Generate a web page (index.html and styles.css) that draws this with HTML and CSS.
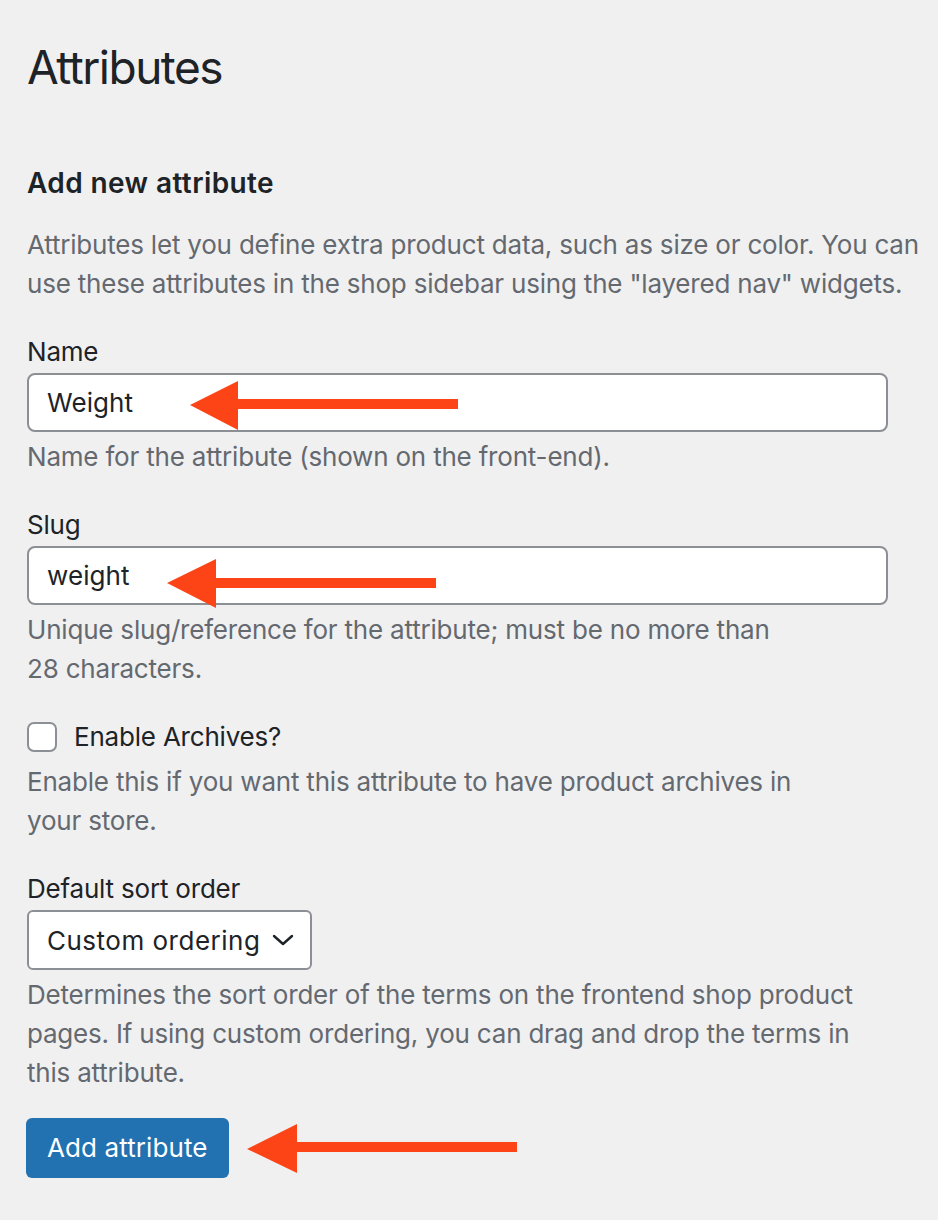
FILE: index.html
```html
<!DOCTYPE html>
<html lang="en">
<head>
<meta charset="utf-8">
<title>Attributes</title>
<link rel="stylesheet" href="styles.css">
</head>
<body>
<div class="wrap">
  <h1 class="page-title">Attributes</h1>
  <form class="form-wrap">
    <h2 class="form-title">Add new attribute</h2>
    <p class="intro">Attributes let you define extra product data, such as size or color. You can<br>use these attributes in the shop sidebar using the "layered nav" widgets.</p>

    <div class="field">
      <label class="label" for="attr-name">Name</label>
      <input class="text-input" id="attr-name" type="text" value="Weight">
      <p class="description">Name for the attribute (shown on the front-end).</p>
    </div>

    <div class="field">
      <label class="label" for="attr-slug">Slug</label>
      <input class="text-input" id="attr-slug" type="text" value="weight">
      <p class="description">Unique slug/reference for the attribute; must be no more than<br>28 characters.</p>
    </div>

    <div class="field">
      <label class="check-row" for="attr-archives">
        <span class="checkbox" id="attr-archives"></span>
        <span class="check-label">Enable Archives?</span>
      </label>
      <p class="description description-check">Enable this if you want this attribute to have product archives in<br>your store.</p>
    </div>

    <div class="field">
      <label class="label" for="attr-order">Default sort order</label>
      <div class="select" id="attr-order">
        <span class="select-value">Custom ordering</span>
        <svg class="chevron" width="22" height="14" viewBox="0 0 22 14"><path d="M2 3 L11 11 L20 3" fill="none" stroke="#1d2327" stroke-width="2.4" stroke-linecap="round" stroke-linejoin="round"/></svg>
      </div>
      <p class="description">Determines the sort order of the terms on the frontend shop product<br>pages. If using custom ordering, you can drag and drop the terms in<br>this attribute.</p>
    </div>

    <div class="submit">
      <button type="button" class="button-primary">Add attribute</button>
    </div>
  </form>

  <svg class="arrows" width="938" height="1220" viewBox="0 0 938 1220" aria-hidden="true">
    <g fill="#fd4416">
      <polygon points="190,405 238,381 238,430"/>
      <rect x="236" y="399" width="222" height="10"/>
      <polygon points="167,583 216,559 216,608"/>
      <rect x="214" y="578" width="222" height="10"/>
      <polygon points="247,1149 297,1124 297,1173"/>
      <rect x="295" y="1142" width="222" height="10"/>
    </g>
  </svg>
</div>
</body>
</html>
```

FILE: styles.css
```css
html, body {
  margin: 0;
  padding: 0;
  background: #f0f0f1;
}

body {
  font-family: Inter, "Noto Sans", "Liberation Sans", sans-serif;
  color: #1d2327;
  font-size: 26px;
  line-height: 39px;
  letter-spacing: -0.2px;
}

.wrap {
  position: relative;
  width: 938px;
  min-height: 1220px;
  padding: 37px 0 0 27px;
  box-sizing: border-box;
}

.page-title {
  margin: 0;
  font-size: 46px;
  font-weight: 400;
  line-height: 60px;
  letter-spacing: -1.5px;
  color: #1d2327;
}

.form-wrap {
  margin: 0;
  width: 861px;
}

.form-title {
  margin: 68px 0 0;
  font-size: 28px;
  font-weight: 600;
  line-height: 36px;
  letter-spacing: 0.4px;
}

.intro {
  margin: 24px 0 0;
  color: #646970;
  white-space: nowrap;
}

.field {
  margin-top: 29px;
}

.label {
  display: block;
  margin-bottom: 2px;
}

.text-input {
  display: block;
  box-sizing: border-box;
  width: 861px;
  height: 59px;
  margin: 0;
  padding: 0 18px;
  border: 2px solid #8c8f94;
  border-radius: 8px;
  background: #fff;
  font-family: inherit;
  font-size: 26px;
  letter-spacing: 0.1px;
  color: #1d2327;
  outline: none;
}

.description {
  margin: 5px 0 0;
  color: #646970;
  white-space: nowrap;
}

.check-row {
  display: flex;
  align-items: center;
  gap: 17px;
  height: 39px;
}

.checkbox {
  display: block;
  width: 30px;
  height: 30px;
  box-sizing: border-box;
  border: 2px solid #8c8f94;
  border-radius: 7px;
  background: #fff;
}

.description-check {
  margin-top: 6px;
}

.select {
  display: flex;
  align-items: center;
  justify-content: space-between;
  box-sizing: border-box;
  width: 285px;
  height: 60px;
  margin-top: 1px;
  padding: 0 16px 0 18px;
  border: 2px solid #8c8f94;
  border-radius: 6px;
  background: #fff;
}

.select-value {
  letter-spacing: 0.5px;
}

.chevron {
  display: block;
}

.submit {
  margin-top: 26px;
}

.button-primary {
  display: block;
  box-sizing: border-box;
  height: 60px;
  margin: 0 0 0 -1px;
  padding: 0 21px;
  border: 0;
  border-radius: 6px;
  background: #2271b1;
  color: #fff;
  font-family: inherit;
  font-size: 26px;
  letter-spacing: 0.1px;
  line-height: 60px;
}

.arrows {
  position: absolute;
  left: 0;
  top: 0;
  pointer-events: none;
}
```
